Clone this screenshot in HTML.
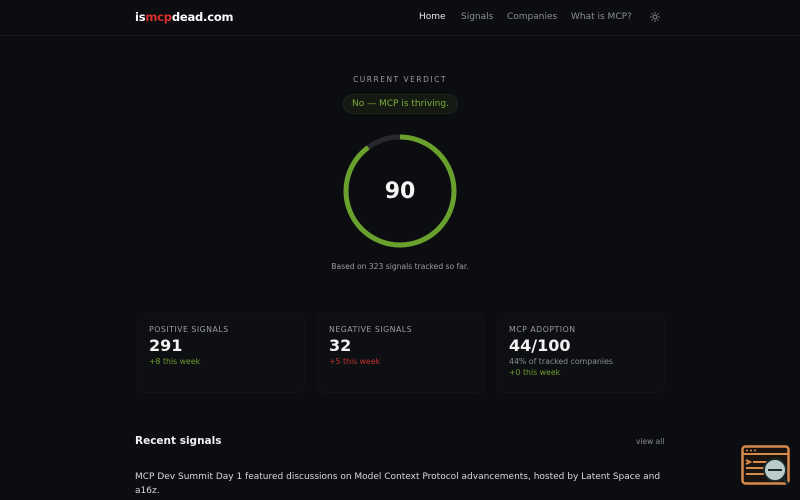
<!DOCTYPE html>
<html><head><meta charset="utf-8"><style>
*{margin:0;padding:0;box-sizing:border-box}
body{width:800px;height:500px;overflow:hidden;background:#0c0d11;font-family:"DejaVu Sans","Liberation Sans",sans-serif;color:#e6e6e6;position:relative}
.hdr{position:absolute;left:0;top:0;width:800px;height:36px;border-bottom:1px solid #16181c}
.logo{position:absolute;left:135px;top:10px;font-weight:bold;font-size:11.5px;color:#fff;letter-spacing:-0.2px}
.logo span{color:#d9302c}
.nav{position:absolute;top:12px;font-size:9px;color:#8a8d94}
.t{position:absolute;left:0;width:800px;text-align:center}
.card{position:absolute;top:313px;width:168px;height:80px;background:#0d0f12;border:1px solid #111317;border-radius:6px;padding:11px 11px}
.lab{font-size:7.8px;letter-spacing:.5px;color:#9a9ca2}
.num{font-size:16px;font-weight:bold;color:#f2f2f2;margin-top:2px}
.sm{font-size:7.8px;margin-top:2px}
</style></head><body>
<div class="hdr"></div>
<div class="logo">is<span>mcp</span>dead.com</div>
<div class="nav" style="left:419px;color:#e8e8e8">Home</div>
<div class="nav" style="left:461px">Signals</div>
<div class="nav" style="left:507px">Companies</div>
<div class="nav" style="left:571px">What is MCP?</div>
<svg style="position:absolute;left:650px;top:12px" width="10" height="10" viewBox="0 0 10 10" stroke="#8a8d94" stroke-width="1" fill="none"><circle cx="5" cy="5" r="2"/><path d="M5 0v1.5M5 8.5V10M0 5h1.5M8.5 5H10M1.5 1.5l1 1M7.5 7.5l1 1M1.5 8.5l1-1M7.5 2.5l1-1"/></svg>
<div class="t" style="top:75px;font-size:7.5px;letter-spacing:1.5px;color:#9a9ca2">CURRENT VERDICT</div>
<div style="position:absolute;left:343px;top:94px;width:115px;height:20px;border-radius:10px;background:#141a12;border:1px solid #1c2519;color:#7fae3a;font-size:9px;text-align:center;line-height:19px">No — MCP is thriving.</div>
<svg style="position:absolute;left:340px;top:131px" width="120" height="120" viewBox="0 0 120 120"><circle cx="60" cy="60" r="54" fill="none" stroke="#26282d" stroke-width="5"/><circle cx="60" cy="60" r="54" fill="none" stroke="#6aa02c" stroke-width="5" stroke-dasharray="305 40" transform="rotate(-90 60 60)"/></svg>
<div class="t" style="top:179px;font-size:22px;font-weight:bold;color:#f4f4f4">90</div>
<div class="t" style="top:262px;font-size:7.6px;color:#9a9ca2">Based on 323 signals tracked so far.</div>
<div class="card" style="left:137px"><div class="lab">POSITIVE SIGNALS</div><div class="num">291</div><div class="sm" style="color:#6f9a30">+8 this week</div></div>
<div class="card" style="left:317px"><div class="lab">NEGATIVE SIGNALS</div><div class="num">32</div><div class="sm" style="color:#c2342c">+5 this week</div></div>
<div class="card" style="left:497px"><div class="lab">MCP ADOPTION</div><div class="num">44/100</div><div class="sm" style="color:#8a8d94">44% of tracked companies</div><div class="sm" style="color:#6f9a30">+0 this week</div></div>
<div style="position:absolute;left:135px;top:435px;font-size:10.5px;font-weight:bold;color:#f0f0f0">Recent signals</div>
<div style="position:absolute;left:636px;top:437px;font-size:7.5px;color:#8a8d94">view all</div>
<div style="position:absolute;left:135px;top:470px;width:540px;font-size:9px;line-height:14px;color:#d8d8d8">MCP Dev Summit Day 1 featured discussions on Model Context Protocol advancements, hosted by Latent Space and a16z.</div>
<svg style="position:absolute;left:741px;top:445px" width="50" height="42" viewBox="0 0 50 42"><rect x="1.5" y="1.5" width="46" height="37" rx="3" fill="#1a1410" stroke="#d88a4a" stroke-width="2.5"/><line x1="1.5" y1="9" x2="47.5" y2="9" stroke="#d88a4a" stroke-width="2"/><circle cx="6" cy="5.5" r="1" fill="#d88a4a"/><circle cx="10" cy="5.5" r="1" fill="#d88a4a"/><circle cx="14" cy="5.5" r="1" fill="#d88a4a"/><path d="M5 15l4 2-4 2M12 17h14M5 23h20M5 29h18" stroke="#d88a4a" stroke-width="2" fill="none"/><circle cx="34" cy="25" r="11" fill="#b9ccc9" stroke="#1c2a2e" stroke-width="2"/><line x1="27" y1="25" x2="41" y2="25" stroke="#1c2a2e" stroke-width="2"/><line x1="42" y1="33" x2="47" y2="39" stroke="#1c2a2e" stroke-width="3"/></svg>
</body></html>
